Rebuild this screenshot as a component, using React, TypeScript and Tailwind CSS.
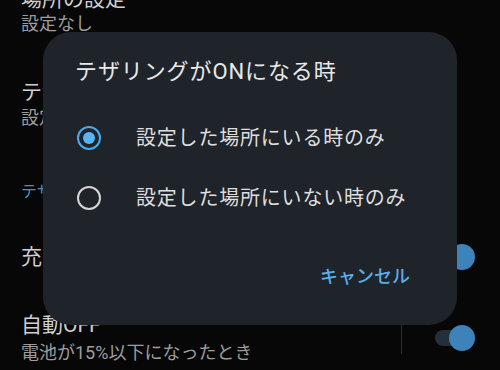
import React, { useState } from "react";

const FONT = { fontFamily: "Roboto, 'Noto Sans CJK JP', sans-serif" };

function Toggle({ on }: { on: boolean }) {
  return (
    <div className="relative w-[40px] h-[26px] shrink-0">
      <div className="absolute left-0 top-[5px] w-[34px] h-[16px] rounded-full bg-[#23303b]" />
      <div
        className={
          on
            ? "absolute right-0 top-0 w-[26px] h-[26px] rounded-full bg-[#3e82ba]"
            : "absolute left-0 top-0 w-[26px] h-[26px] rounded-full bg-[#8a8a8a]"
        }
      />
    </div>
  );
}

function Radio({ checked }: { checked: boolean }) {
  return checked ? (
    <div className="w-[24px] h-[24px] rounded-full border-[2.5px] border-[#4aa9ee] flex items-center justify-center shrink-0">
      <div className="w-[12px] h-[12px] rounded-full bg-[#5ab3f3]" />
    </div>
  ) : (
    <div className="w-[24px] h-[24px] rounded-full border-[2.5px] border-[#d6d6d6] shrink-0" />
  );
}

export default function App(): JSX.Element {
  const [choice, setChoice] = useState<number>(0);

  const options = ["設定した場所にいる時のみ", "設定した場所にいない時のみ"];

  return (
    <div
      className="relative w-[500px] h-[370px] overflow-hidden bg-[#070707]"
      style={FONT}
    >
      {/* settings list behind the dialog */}
      <div className="flex flex-col pl-[21px] pr-[25px] -mt-[15px]">
        <div className="text-[21px] leading-[28px] text-[#cfcfcf]">場所の設定</div>
        <div className="text-[18px] leading-[22px] text-[#9d9d9d]">設定なし</div>

        <div className="mt-[43px] text-[21px] leading-[28px] text-[#cfcfcf]">
          テザリングのON/OFF
        </div>
        <div className="mt-[1px] text-[18px] leading-[22px] text-[#9d9d9d]">
          設定した場所にいる時のみ
        </div>

        <div className="mt-[52px] text-[16px] leading-[22px] text-[#4d8ec4]">
          テザリングの設定
        </div>

        <div className="mt-[40px] h-[28px] flex items-center justify-between">
          <div className="text-[21px] leading-[28px] text-[#cfcfcf]">充電中はOFFにしない</div>
          <Toggle on />
        </div>

        <div className="mt-[40px] flex items-center">
          <div className="flex flex-col flex-1">
            <div className="text-[21px] leading-[28px] text-[#cfcfcf]">自動OFF</div>
            <div className="mt-[3px] text-[18px] leading-[22px] text-[#9d9d9d]">
              電池が15%以下になったとき
            </div>
          </div>
          <div className="w-px h-[33px] bg-[#2f2f2f] mr-[33px]" />
          <Toggle on />
        </div>
      </div>

      {/* dialog */}
      <div className="absolute left-[43px] top-[32px] w-[414px] h-[293px] rounded-[28px] bg-[#1f232a] flex flex-col pt-[25px]">
        <div className="px-[32px] text-[22px] leading-[30px] text-[#e8e8e8] tracking-[0.9px]">
          テザリングがONになる時
        </div>

        <div className="mt-[21px] flex flex-col">
          {options.map((label, i) => (
            <div
              key={label}
              className="h-[60px] flex items-center pl-[34px] gap-[35px] cursor-pointer"
              onClick={() => setChoice(i)}
            >
              <Radio checked={choice === i} />
              <span className="text-[20px] leading-[28px] text-[#dedede] tracking-[0.8px]">
                {label}
              </span>
            </div>
          ))}
        </div>

        <div className="mt-[29px] h-[40px] flex items-center justify-end pr-[47px]">
          <span className="text-[18px] leading-[24px] font-medium text-[#5aaee8]">
            キャンセル
          </span>
        </div>
      </div>
    </div>
  );
}
